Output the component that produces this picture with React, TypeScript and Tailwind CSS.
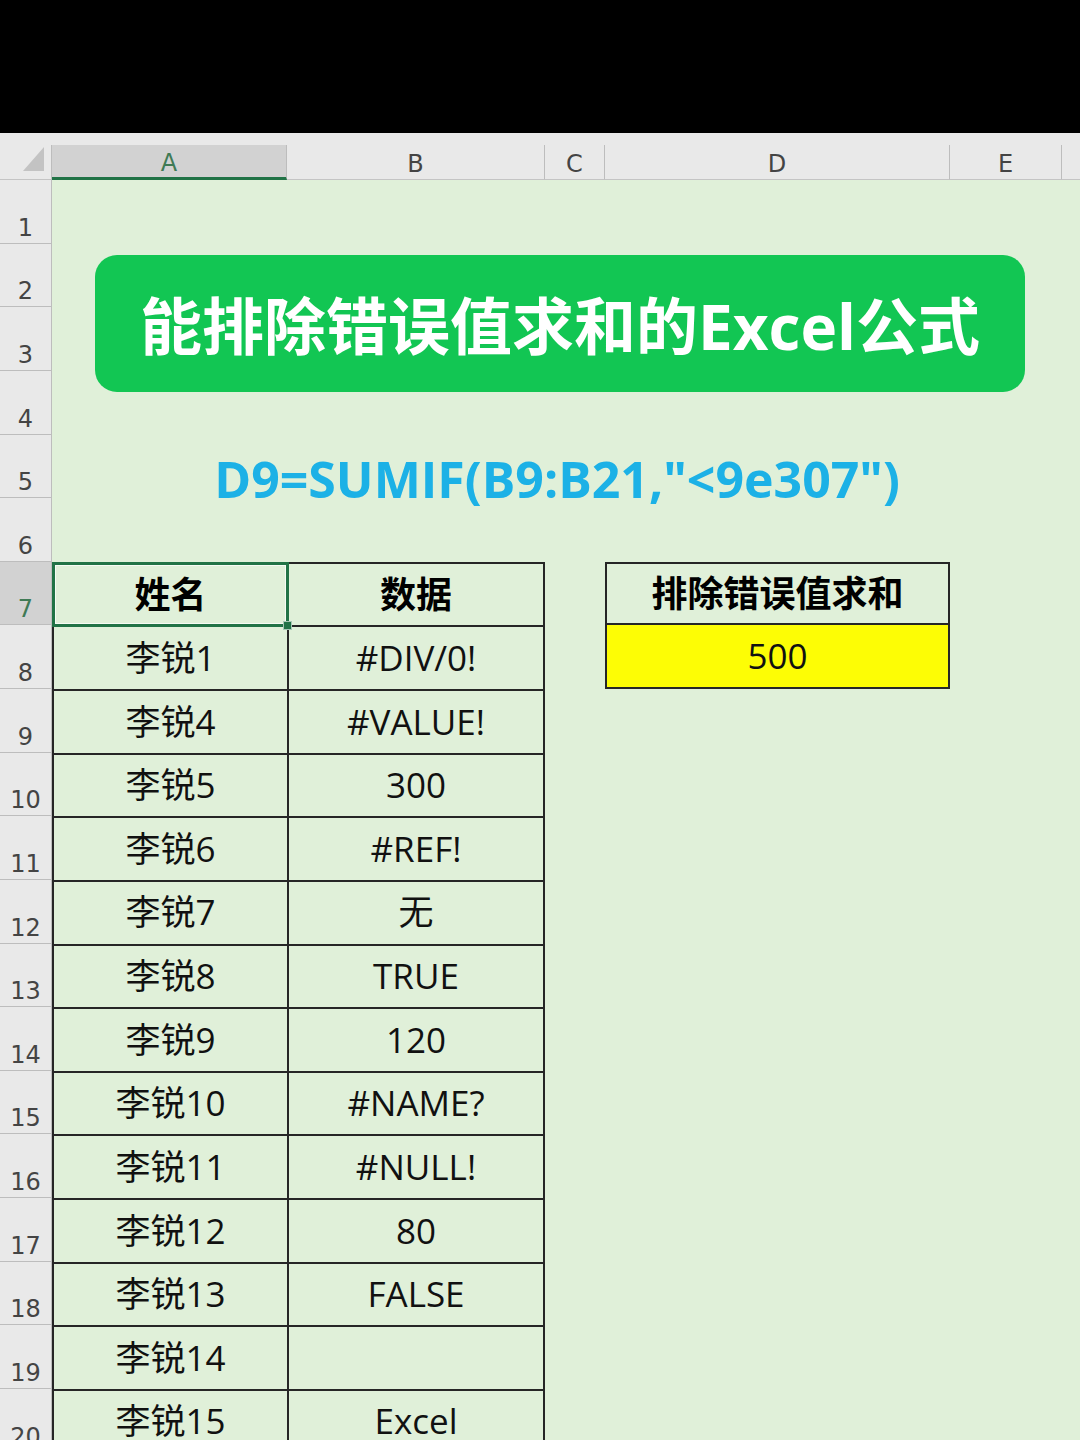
import React from "react";

const ROW_START = [
  "row-start-1",
  "row-start-2",
  "row-start-3",
  "row-start-4",
  "row-start-5",
  "row-start-6",
  "row-start-7",
  "row-start-8",
  "row-start-9",
  "row-start-10",
  "row-start-11",
  "row-start-12",
  "row-start-13",
  "row-start-14",
  "row-start-15",
  "row-start-16",
  "row-start-17",
  "row-start-18",
  "row-start-19",
  "row-start-20",
  "row-start-21",
];

const data: [string, string][] = [
  ["李锐1", "#DIV/0!"],
  ["李锐4", "#VALUE!"],
  ["李锐5", "300"],
  ["李锐6", "#REF!"],
  ["李锐7", "无"],
  ["李锐8", "TRUE"],
  ["李锐9", "120"],
  ["李锐10", "#NAME?"],
  ["李锐11", "#NULL!"],
  ["李锐12", "80"],
  ["李锐13", "FALSE"],
  ["李锐14", ""],
  ["李锐15", "Excel"],
  ["李锐16", "50"],
];

const cellFont = "font-['Open_Sans','Noto_Sans_CJK_SC',sans-serif]";

function ColHead({ label, w, active }: { label: string; w: string; active?: boolean }) {
  return (
    <div
      className={`${w} h-[35px] flex items-center justify-center pt-[3px] border-r border-[#bdbdbd] text-[24px] leading-none ${
        active
          ? "bg-[#d2d2d2] text-[#3f7a55] border-b-[3px] border-b-[#217346]"
          : "text-[#444] border-b border-b-[#c4c4c4]"
      }`}
    >
      {label}
    </div>
  );
}

export default function App() {
  return (
    <div className="w-[1080px] h-[1440px] overflow-hidden bg-black flex flex-col font-['DejaVu_Sans',sans-serif]">
      <div className="h-[133px] shrink-0" />

      {/* column header */}
      <div className="h-[47px] shrink-0 flex items-end bg-[#e9e9e9]">
        <div className="w-[52px] h-[35px] flex items-end justify-end pr-[7px] pb-[8px] border-r border-[#bdbdbd] border-b border-b-[#c4c4c4]">
          <svg width="21" height="24" viewBox="0 0 21 24">
            <polygon points="0,24 21,24 21,0" fill="#c3c3c3" />
          </svg>
        </div>
        <ColHead label="A" w="w-[235px]" active />
        <ColHead label="B" w="w-[258px]" />
        <ColHead label="C" w="w-[60px]" />
        <ColHead label="D" w="w-[345px]" />
        <ColHead label="E" w="w-[112px]" />
        <div className="flex-1 h-[35px] border-b border-[#c4c4c4]" />
      </div>

      {/* sheet body */}
      <div className="flex-1 grid grid-cols-[52px_235px_258px_60px_345px_112px_1fr] grid-rows-[repeat(21,63.63px)] bg-[#e0f0d9]">
        {ROW_START.map((rs, i) => (
          <div
            key={rs}
            className={`${rs} col-start-1 flex items-end justify-center pb-[3px] border-r border-b border-[#bdbdbd] text-[24px] leading-none ${
              i === 6 ? "bg-[#d2d2d2] text-[#3f7a55]" : "bg-[#e9e9e9] text-[#444]"
            }`}
          >
            {i + 1}
          </div>
        ))}

        {/* title shape */}
        <div className="col-start-2 col-span-5 row-start-2 row-span-3 self-start ml-[43px] mt-[11px] w-[930px] h-[137px] rounded-[22px] bg-[#12c653] flex items-center justify-center">
          <span className={`${cellFont} text-white text-[62px] font-bold leading-none translate-y-[3px]`}>
            能排除错误值求和的Excel公式
          </span>
        </div>

        {/* formula */}
        <div className="col-start-2 col-span-5 row-start-5 flex items-end justify-center">
          <span className="font-['Open_Sans',sans-serif] text-[50px] font-bold leading-none text-[#1cb1e6] translate-y-[6px]">
            D9=SUMIF(B9:B21,"&lt;9e307")
          </span>
        </div>

        {/* table header */}
        <div className={`row-start-7 col-start-2 relative flex items-center justify-center border-l-2 border-t-2 border-[#262626] ${cellFont} text-[36px] font-bold text-black`}>
          姓名
          <div className="absolute -inset-[2px] border-[3px] border-[#217346]">
            <div className="w-full h-full border border-white/70" />
          </div>
          <div className="absolute -right-[5px] -bottom-[5px] w-[9px] h-[9px] bg-[#217346] border border-white/60" />
        </div>
        <div className={`row-start-7 col-start-3 flex items-center justify-center border-l-2 border-t-2 border-r-2 border-[#262626] ${cellFont} text-[36px] font-bold text-black`}>
          数据
        </div>

        {data.map(([name, val], i) => (
          <React.Fragment key={name}>
            <div
              className={`${ROW_START[7 + i]} col-start-2 flex items-center justify-center border-l-2 border-t-2 border-[#262626] ${cellFont} text-[35px] text-[#111]`}
            >
              {name}
            </div>
            <div
              className={`${ROW_START[7 + i]} col-start-3 flex items-center justify-center border-l-2 border-t-2 border-r-2 border-[#262626] ${cellFont} text-[35px] text-[#111]`}
            >
              {val}
            </div>
          </React.Fragment>
        ))}

        {/* result table */}
        <div className={`row-start-7 col-start-5 flex items-center justify-center border-2 border-[#262626] ${cellFont} text-[36px] font-bold text-black`}>
          排除错误值求和
        </div>
        <div className={`row-start-8 col-start-5 flex items-center justify-center border-x-2 border-b-2 border-[#262626] bg-[#fdfd05] ${cellFont} text-[35px] text-[#111]`}>
          500
        </div>
      </div>
    </div>
  );
}
